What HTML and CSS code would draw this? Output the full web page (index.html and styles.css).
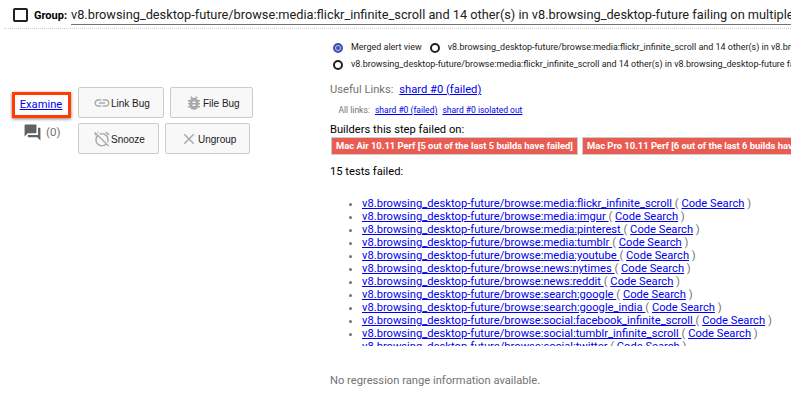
FILE: index.html
```html
<!DOCTYPE html>
<html lang="en">
<head>
<meta charset="utf-8">
<title>Alerts</title>
<link rel="stylesheet" href="styles.css">
</head>
<body>
<header class="group">
  <span class="checkbox"></span>
  <b class="group-label">Group:</b>
  <div class="group-name">v8.browsing_desktop-future/browse:media:flickr_infinite_scroll and 14 other(s) in v8.browsing_desktop-future failing on multiple builders</div>
</header>
<main class="alert">
  <aside class="side">
    <div class="examine"><a href="#">Examine</a></div>
    <div class="comments">
      <svg class="icon-comments" viewBox="0 0 24 24"><path d="M21 6h-2v9H6v2c0 .55.45 1 1 1h11l4 4V7c0-.55-.45-1-1-1zm-4 6V3c0-.55-.45-1-1-1H3c-.55 0-1 .45-1 1v14l4-4h10c.55 0 1-.45 1-1z"/></svg>
      <span>(0)</span>
    </div>
  </aside>
  <div class="actions">
    <div class="action-row">
      <button class="btn link"><svg viewBox="0 0 24 24"><path d="M3.9 12c0-1.71 1.39-3.1 3.1-3.1h4V7H7c-2.76 0-5 2.24-5 5s2.24 5 5 5h4v-1.900H7c-1.710 0-3.100-1.390-3.100-3.100zM8 13h8v-2H8v2zm9-6h-4v1.900h4c1.710 0 3.100 1.390 3.100 3.100s-1.390 3.100-3.100 3.100h-4V17h4c2.760 0 5-2.240 5-5s-2.240-5-5-5z"/></svg><span>Link Bug</span></button>
      <button class="btn file"><svg viewBox="0 0 24 24"><path d="M20 8h-2.810c-.45-.78-1.070-1.450-1.820-1.960L17 4.410 15.590 3l-2.170 2.170C12.960 5.060 12.490 5 12 5c-.49 0-.96.06-1.410.17L8.410 3 7 4.410l1.620 1.630C7.880 6.550 7.260 7.220 6.810 8H4v2h2.090c-.05.33-.09.66-.09 1v1H4v2h2v1c0 .34.04.67.09 1H4v2h2.810c1.040 1.790 2.970 3 5.190 3s4.150-1.210 5.190-3H20v-2h-2.090c.05-.33.09-.66.09-1v-1h2v-2h-2v-1c0-.34-.04-.67-.09-1H20V8zm-6 8h-4v-2h4v2zm0-4h-4v-2h4v2z"/></svg><span>File Bug</span></button>
    </div>
    <div class="action-row">
      <button class="btn snooze"><svg viewBox="0 0 24 24"><path d="M12 6c3.870 0 7 3.130 7 7 0 .84-.16 1.650-.43 2.400l1.520 1.520c.58-1.190.91-2.510.91-3.920 0-4.970-4.030-9-9-9-1.410 0-2.730.33-3.920.91L9.600 6.430C10.350 6.160 11.160 6 12 6zm10-.28l-4.600-3.860-1.290 1.530 4.600 3.860L22 5.720zM2.920 2.290L1.650 3.570 2.980 4.900l-1.110.93 1.420 1.420 1.110-.94.8.8C3.830 8.690 3 10.750 3 13c0 4.970 4.020 9 9 9 2.250 0 4.310-.83 5.890-2.200l2.200 2.200 1.270-1.270L3.890 3.270l-.97-.98zm13.550 16.100C15.260 19.390 13.700 20 12 20c-3.870 0-7-3.130-7-7 0-1.700.61-3.260 1.610-4.470l9.860 9.860zM8.020 3.280L6.600 1.860l-.86.71 1.420 1.420.86-.71z"/></svg><span>Snooze</span></button>
      <button class="btn ungroup"><svg viewBox="0 0 24 24"><path d="M19 6.410L17.590 5 12 10.590 6.410 5 5 6.410 10.590 12 5 17.590 6.410 19 12 13.410 17.590 19 19 17.590 13.410 12z"/></svg><span>Ungroup</span></button>
    </div>
  </div>
  <section class="details">
    <div class="views">
      <div class="view-row">
        <span class="radio on"></span><span class="view-name">Merged alert view</span>
        <span class="radio"></span><span class="view-name">v8.browsing_desktop-future/browse:media:flickr_infinite_scroll and 14 other(s) in v8.browsing_desktop-future failing</span>
      </div>
      <div class="view-row">
        <span class="radio"></span><span class="view-name">v8.browsing_desktop-future/browse:media:flickr_infinite_scroll and 14 other(s) in v8.browsing_desktop-future failing</span>
      </div>
    </div>
    <div class="useful">Useful Links: <a href="#">shard #0 (failed)</a></div>
    <div class="all-links">All links: <a href="#">shard #0 (failed)</a><a href="#">shard #0 isolated out</a></div>
    <div class="builders-title">Builders this step failed on:</div>
    <div class="builders">
      <span class="builder">Mac Air 10.11 Perf [5 out of the last 5 builds have failed]</span>
      <span class="builder">Mac Pro 10.11 Perf [6 out of the last 6 builds have failed]</span>
    </div>
    <div class="tests-title">15 tests failed:</div>
    <ul class="tests">
      <li><a href="#">v8.browsing_desktop-future/browse:media:flickr_infinite_scroll&nbsp;</a>( <a href="#">Code Search</a> )</li>
      <li><a href="#">v8.browsing_desktop-future/browse:media:imgur&nbsp;</a>( <a href="#">Code Search</a> )</li>
      <li><a href="#">v8.browsing_desktop-future/browse:media:pinterest&nbsp;</a>( <a href="#">Code Search</a> )</li>
      <li><a href="#">v8.browsing_desktop-future/browse:media:tumblr&nbsp;</a>( <a href="#">Code Search</a> )</li>
      <li><a href="#">v8.browsing_desktop-future/browse:media:youtube&nbsp;</a>( <a href="#">Code Search</a> )</li>
      <li><a href="#">v8.browsing_desktop-future/browse:news:nytimes&nbsp;</a>( <a href="#">Code Search</a> )</li>
      <li><a href="#">v8.browsing_desktop-future/browse:news:reddit&nbsp;</a>( <a href="#">Code Search</a> )</li>
      <li><a href="#">v8.browsing_desktop-future/browse:search:google&nbsp;</a>( <a href="#">Code Search</a> )</li>
      <li><a href="#">v8.browsing_desktop-future/browse:search:google_india&nbsp;</a>( <a href="#">Code Search</a> )</li>
      <li><a href="#">v8.browsing_desktop-future/browse:social:facebook_infinite_scroll&nbsp;</a>( <a href="#">Code Search</a> )</li>
      <li><a href="#">v8.browsing_desktop-future/browse:social:tumblr_infinite_scroll&nbsp;</a>( <a href="#">Code Search</a> )</li>
      <li><a href="#">v8.browsing_desktop-future/browse:social:twitter&nbsp;</a>( <a href="#">Code Search</a> )</li>
    </ul>
    <div class="no-range">No regression range information available.</div>
  </section>
</main>
</body>
</html>
```

FILE: styles.css
```css
* { box-sizing: border-box; }
body {
  margin: 0;
  height: 406px;
  overflow: hidden;
  background: #fff;
  color: #737373;
  font: 11.18px/13px Roboto, sans-serif;
  white-space: nowrap;
}
a { color: #0000ee; text-decoration: underline; }

.group {
  display: flex;
  align-items: flex-start;
  height: 29px;
  margin-left: 4px;
  padding: 5px 0 0 9px;
  border-bottom: 1px dotted #ccc;
  color: #212121;
}
.checkbox {
  flex: none;
  width: 15px;
  height: 14px;
  margin-top: 3px;
  border: 2px solid #212121;
  border-radius: 2px;
}
.group-label { width: 37px; margin-left: 6px; padding-top: 4px; color: #000; font-size: 11px; }
.group-name {
  flex: 1;
  min-width: 0;
  height: 20px;
  overflow: hidden;
  border-bottom: 1px solid #737373;
  font-size: 12.78px;
  line-height: 20px;
}

.alert { display: flex; }
.side { width: 78px; padding: 63px 0 0 12px; }
.examine {
  width: 59px;
  height: 26px;
  border: 3px solid #ff3d00;
  box-shadow: 0 1px 3px rgba(0, 0, 0, .5);
  text-align: center;
  line-height: 19px;
}
.examine a { margin-right: 1px; }
.comments { display: flex; align-items: center; gap: 4px; margin: 5px 0 0 11px; }
.comments span { font-size: 11.6px; }
.icon-comments { width: 19px; height: 19px; fill: #616161; }

.actions { width: 252px; padding-top: 58px; }
.action-row { display: flex; gap: 6px; margin-bottom: 5px; }
.btn {
  display: flex;
  align-items: center;
  height: 31px;
  padding: 0 0 0 14px;
  border: 1px solid #ccc;
  border-radius: 2px;
  background: #f8f8f8;
  color: #212121;
  font: 10px "Liberation Sans", sans-serif;
}
.btn svg { width: 18px; height: 18px; fill: #aaa; }
.btn span { padding-top: 1px; }
.link { width: 86px; }
.file { width: 83px; }
.snooze { width: 81px; }
.ungroup { width: 85px; }

.details { flex: 1; min-width: 0; overflow: hidden; padding-top: 10px; }
.views { font-size: 8.96px; color: #212121; }
.view-row { display: flex; align-items: center; height: 17px; }
.radio {
  flex: none;
  width: 10px;
  height: 10px;
  margin: 0 8px 0 3px;
  border: 2px solid #212121;
  border-radius: 50%;
}
.radio.on { border-color: #3f51b5; background: #3f51b5; box-shadow: inset 0 0 0 1px #c5cae9; }
.view-name + .radio { margin-left: 8px; }
.useful { margin-top: 10px; }
.useful a { margin-left: 3px; }
.all-links { margin: 8px 0 0 8.5px; font-size: 8.5px; }
.all-links a { margin-left: 3px; }
.all-links a + a { margin-left: 5px; }
.builders-title { margin-top: 6px; color: #000; }
.builders { display: flex; gap: 4px; margin-top: 1px; padding-left: 1px; }
.builder {
  height: 18px;
  padding: 0 4px;
  border: 1px solid #ccc;
  background: #e95c54;
  color: #fff;
  font-size: 9.4px;
  font-weight: bold;
  line-height: 16px;
}
.tests-title { margin-top: 10px; color: #000; }
.tests { height: 149px; margin: 19px 0 0; padding: 0 0 0 32px; overflow: hidden; }
.no-range { margin-top: 28px; }
```
